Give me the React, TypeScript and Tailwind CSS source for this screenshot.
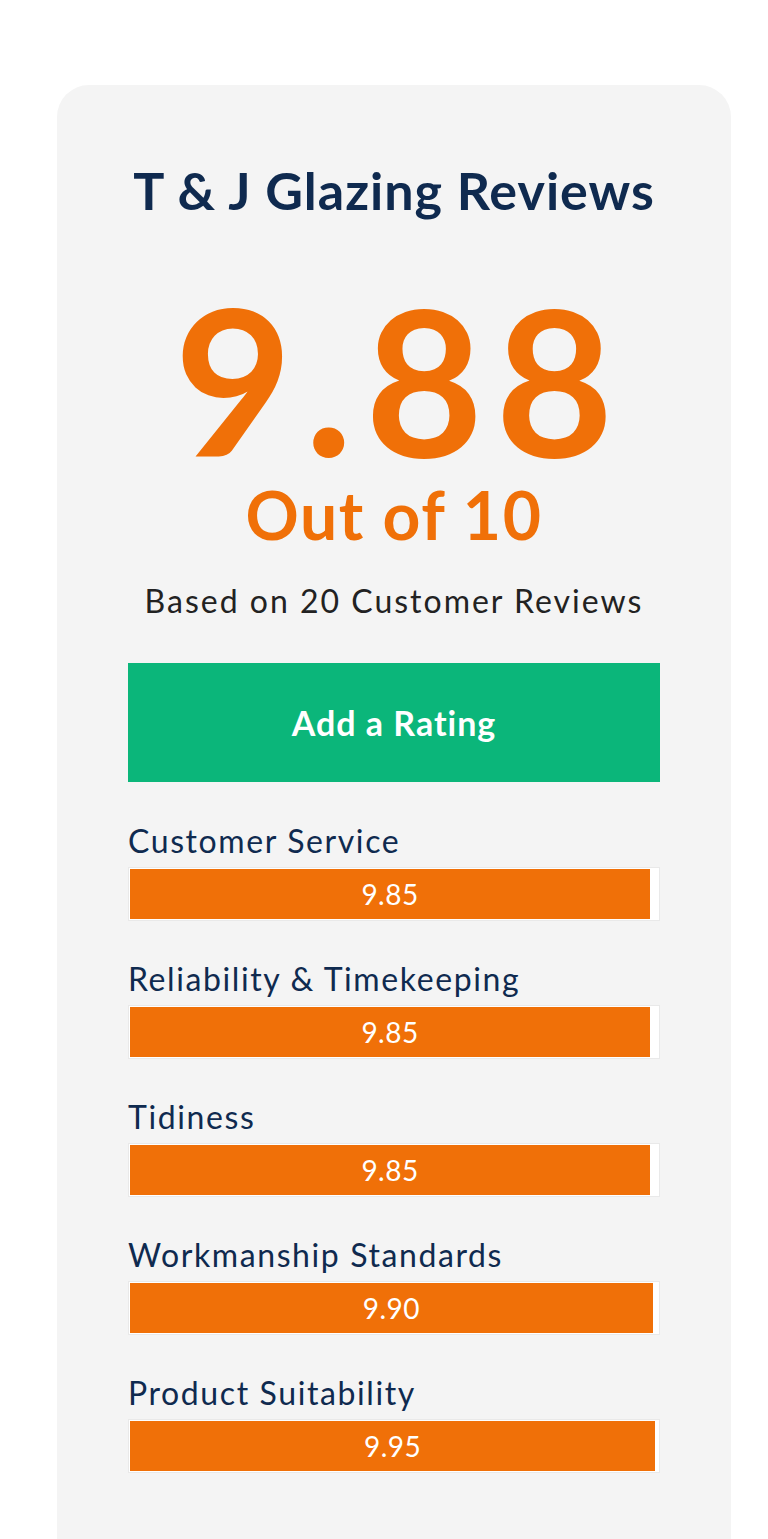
import React from 'react';

const ratings = [
  { label: 'Customer Service', score: 9.85 },
  { label: 'Reliability & Timekeeping', score: 9.85 },
  { label: 'Tidiness', score: 9.85 },
  { label: 'Workmanship Standards', score: 9.9 },
  { label: 'Product Suitability', score: 9.95 },
];

export default function App() {
  return (
    <div className="min-h-[1539px] bg-white font-['Lato',sans-serif] pt-[85px] overflow-hidden">
      <div className="ml-[57px] w-[674px] h-[1454px] rounded-t-[32px] bg-[#f4f4f4] px-[71px] pt-[75px] flex flex-col items-center">
        {/* heading */}
        <h1 className="text-[52px] leading-[60px] font-bold text-[#0f2a4f] tracking-[1px]">T &amp; J Glazing Reviews</h1>

        <div className="mt-[73px] text-[204px] leading-[170px] font-bold text-[#f07008] tracking-[12px] pl-[12px]">9.88</div>
        <div className="mt-[17px] text-[66px] leading-[70px] font-bold text-[#f07008] tracking-[1.6px]">Out of 10</div>
        <p className="mt-[31px] text-[32px] leading-[40px] text-[#222222] tracking-[2px]">Based on 20 Customer Reviews</p>

        <button className="mt-[42px] w-full h-[119px] bg-[#0bb67a] text-white text-[34px] font-bold tracking-[1px]">
          Add a Rating
        </button>

        {/* category breakdown */}
        <div className="w-full mt-[39px] flex flex-col gap-[38px]">
          {ratings.map((r) => (
            <div key={r.label}>
              <div className="text-[32px] leading-[40px] text-[#0f2a4f] tracking-[1.6px]">{r.label}</div>
              <div className="mt-[6px] h-[54px] bg-white border border-[#e9e9e9] p-[1px]">
                <div
                  className="h-full bg-[#f07008] flex items-center justify-center text-white text-[28px] tracking-[0.5px]"
                  style={{ width: `${r.score * 10}%` }}
                >
                  {r.score.toFixed(2)}
                </div>
              </div>
            </div>
          ))}
        </div>
      </div>
    </div>
  );
}
